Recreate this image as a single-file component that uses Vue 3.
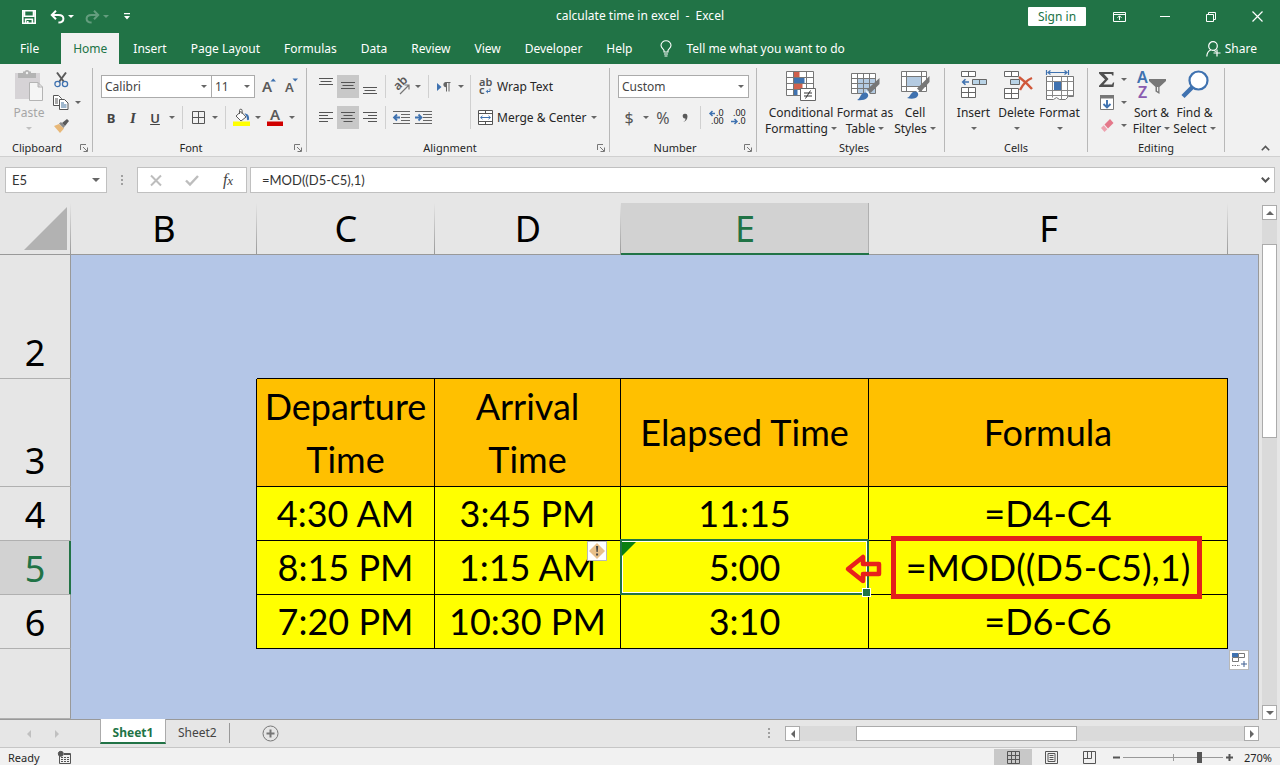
<template>
  <div class="excel">
    <header class="titlebar">
      <div class="quick">
        <button class="quick__btn" aria-label="Save">
          <svg width="14" height="14" viewBox="0 0 14 14" fill="none" stroke="#fff" stroke-width="1.6">
            <path d="M.8.8h12.4v12.4H.8z M2.5 1v5.2h9V1 M3.6 13V9.3h6.8V13 M5.8 13v-2" />
          </svg>
        </button>
        <button class="quick__btn quick__btn--wide" aria-label="Undo">
          <svg width="15" height="14" viewBox="0 0 15 14" fill="none" stroke="#fff" stroke-width="2">
            <path d="M6 .8 1.8 5 6 9.2 M2 5h6.5c3 0 4.9 1.5 4.9 3.8 0 2.4-2 3.8-5 3.8" />
          </svg>
          <span class="caret caret--white"></span>
        </button>
        <button class="quick__btn quick__btn--wide quick__btn--off" aria-label="Redo">
          <svg width="15" height="14" viewBox="0 0 15 14" fill="none" stroke="#fff" stroke-width="2">
            <path d="M9 .8 13.2 5 9 9.2 M13 5H6.5c-3 0-4.9 1.5-4.9 3.8 0 2.4 2 3.8 5 3.8" />
          </svg>
          <span class="caret caret--white"></span>
        </button>
        <button class="quick__btn quick__btn--more" aria-label="Customize Quick Access Toolbar">
          <svg width="6" height="7" viewBox="0 0 6 7" fill="#fff"><path d="M0 0h6v1.2H0z M0 3h6L3 6.5z" /></svg>
        </button>
      </div>
      <div class="titlebar__name">calculate time in excel&nbsp; -&nbsp; Excel</div>
      <div class="titlebar__right">
        <button class="signin">Sign in</button>
        <button class="win" aria-label="Ribbon Display Options">
          <svg width="13" height="10" viewBox="0 0 13 10" fill="none" stroke="#fff"><path d="M.5.5h12v9H.5z M.5 2.5h12 M6.5 8V4 M4.5 5.8l2-2 2 2" /></svg>
        </button>
        <button class="win" aria-label="Minimize">
          <svg width="10" height="10" viewBox="0 0 10 10" stroke="#fff"><path d="M0 4.5h10" /></svg>
        </button>
        <button class="win" aria-label="Restore Down">
          <svg width="10" height="10" viewBox="0 0 10 10" fill="none" stroke="#fff"><path d="M.5 2.5h7v7h-7z M2.5 2.5v-2h7v7h-2" /></svg>
        </button>
        <button class="win" aria-label="Close">
          <svg width="11" height="11" viewBox="0 0 11 11" stroke="#fff" stroke-width="1.2"><path d="M.5.5l10 10 M10.5.5l-10 10" /></svg>
        </button>
      </div>
    </header>

    <nav class="tabs">
      <button
        v-for="tab in tabs"
        :key="tab"
        class="tabs__item"
        :class="{ 'tabs__item--active': tab === activeTab, 'tabs__item--file': tab === 'File' }"
        @click="activeTab = tab"
      >{{ tab }}</button>
      <button class="tabs__tell">
        <svg width="12" height="17" viewBox="0 0 12 17" fill="none" stroke="#fff" stroke-width="1.1">
          <path d="M4 12v-1.5C3.5 9 1 8 1 5.3 1 2.7 3.2.8 6 .8s5 1.9 5 4.5C11 8 8.5 9 8 10.5V12z M4 14h4 M4.5 16h3" />
        </svg>
        Tell me what you want to do
      </button>
      <button class="tabs__share">
        <svg width="15" height="16" viewBox="0 0 15 16" fill="none" stroke="#fff" stroke-width="1.2">
          <circle cx="7" cy="5" r="4.3" /><path d="M.8 15.5c.2-3.5 1.7-5.700 4-6.500 M8 9.500l2 1 M11 8.500v7 M7.500 12h7" />
        </svg>
        Share
      </button>
    </nav>

    <section class="ribbon">
      <div class="group group--clipboard">
        <div class="group__body">
          <button class="big big--off">
            <svg width="30" height="32" viewBox="0 0 30 32">
              <path d="M1 4h25v26H1z" fill="#d6d3d6" />
              <path d="M4 4h18v5H4z M9 2.500h8v3H9z" fill="#b4b4b4" />
              <circle cx="13" cy="3.500" r="2.500" fill="#b4b4b4" />
              <circle cx="13" cy="4" r="1.200" fill="#f1f1f1" />
              <path d="M15.500 13.500h8.500l4.500 4.500v13.500h-13z M24 13.500V18h4.500" fill="#f5f5f5" stroke="#b4b4b4" />
            </svg>
            <span>Paste</span>
            <span class="caret"></span>
          </button>
          <div class="stack">
            <button class="tool" aria-label="Cut">
              <svg width="15" height="16" viewBox="0 0 15 16" fill="none">
                <path d="M3 .5l7 9.500 M12 .5L5 10" stroke="#5a5a5a" stroke-width="2" />
                <circle cx="3.500" cy="12" r="2.600" stroke="#3f72b0" stroke-width="1.300" /><circle cx="11" cy="12" r="2.600" stroke="#3f72b0" stroke-width="1.300" />
              </svg>
            </button>
            <div class="row-pair">
              <button class="tool" aria-label="Copy">
                <svg width="16" height="15" viewBox="0 0 16 15" fill="#fff" stroke="#555">
                  <path d="M.5.5h5l3 3v7h-8z M2 4h3 M2 6h3 M2 8h3" />
                  <path d="M6.500 4.500h5l3.500 3.500v6.500H6.500z" /><path d="M8 8h3 M8 10h5.500 M8 12h5.500" stroke="#41719c" />
                </svg>
              </button>
              <button class="drop" aria-label="Copy options"><span class="caret"></span></button>
            </div>
            <button class="tool" aria-label="Format Painter">
              <svg width="16" height="14" viewBox="0 0 16 14">
                <path d="M1 7l5-2 5 4.500L7 14z" fill="#e8b878" /><path d="M6 4.500l2-1.500 4 4-1.500 2z" fill="#8a8a8a" /><path d="M9 4l5-4 2 2-4 5z" fill="#5a5a5a" />
              </svg>
            </button>
          </div>
        </div>
        <div class="group__label">Clipboard</div>
        <button class="launcher" aria-label="Clipboard options"><svg width="8" height="8" viewBox="0 0 8 8" fill="none" stroke="#777"><path d="M.5 6V.5H6 M3 3l4 4 M7.500 3.500v4h-4" /></svg></button>
      </div>

      <div class="group group--font">
        <div class="group__rows">
          <div class="line">
            <label class="combo combo--font">
              <select aria-label="Font"><option>Calibri</option></select><span class="caret"></span>
            </label>
            <label class="combo combo--size">
              <select aria-label="Font Size"><option>11</option></select><span class="caret"></span>
            </label>
            <button class="tool tool--grow" aria-label="Increase Font Size">
              <svg width="15" height="17" viewBox="0 0 15 17"><text x="0" y="14" font-size="15" font-weight="600" fill="#5a5a5a">A</text><path d="M8.500 3.500h5.500L11.200.5z" fill="#3f72b0" /></svg>
            </button>
            <button class="tool" aria-label="Decrease Font Size">
              <svg width="15" height="17" viewBox="0 0 15 17"><text x="1" y="14" font-size="13" font-weight="600" fill="#5a5a5a">A</text><path d="M8.500.5h5.500L11.200 3.500z" fill="#3f72b0" /></svg>
            </button>
          </div>
          <div class="line">
            <button class="tool glyph glyph--b">B</button>
            <button class="tool glyph glyph--i">I</button>
            <button class="tool glyph glyph--u">U</button>
            <button class="drop" aria-label="Underline options"><span class="caret"></span></button>
            <span class="sep"></span>
            <button class="tool" aria-label="Borders">
              <svg width="13" height="13" viewBox="0 0 13 13" fill="none" stroke="#555"><path d="M.5.5h12v12H.5z M6.500.5v12 M.5 6.500h12" /></svg>
            </button>
            <button class="drop" aria-label="Border options"><span class="caret"></span></button>
            <span class="sep"></span>
            <button class="tool" aria-label="Fill Color">
              <svg width="17" height="17" viewBox="0 0 17 17">
                <path d="M3 7l5-4.500L13 8l-5 4z M6.500 5V1.500a1.300 1.300 0 0 1 2.600 0V5" fill="#fff" stroke="#5a5a5a" />
                <path d="M11.500 4.500c3 0 5 2 4.500 6-.5 1-1.800 1-2 0 0-2-.7-4-2.500-6z" fill="#3f72b0" /><path d="M0 12.500h17V17H0z" fill="#ff0" />
              </svg>
            </button>
            <button class="drop" aria-label="Fill options"><span class="caret"></span></button>
            <button class="tool" aria-label="Font Color">
              <svg width="17" height="17" viewBox="0 0 17 17"><text x="3" y="11" font-size="15" font-weight="600" fill="#5a5a5a">A</text><path d="M0 12.500h16V17H0z" fill="#d00000" /></svg>
            </button>
            <button class="drop" aria-label="Font color options"><span class="caret"></span></button>
          </div>
        </div>
        <div class="group__label">Font</div>
        <button class="launcher" aria-label="Font options"><svg width="8" height="8" viewBox="0 0 8 8" fill="none" stroke="#777"><path d="M.5 6V.5H6 M3 3l4 4 M7.500 3.500v4h-4" /></svg></button>
      </div>

      <div class="group group--align">
        <div class="group__cols">
          <div class="group__rows">
            <div class="line">
              <button class="tool" aria-label="Top Align"><svg width="14" height="17" viewBox="0 0 14 17" stroke="#555"><path d="M0 .5h14 M1.500 3.500h11 M0 6.500h14" /></svg></button>
              <button class="tool tool--on" aria-label="Middle Align"><svg width="14" height="17" viewBox="0 0 14 17" stroke="#555"><path d="M0 4.500h14 M1.500 7.500h11 M0 10.500h14" /></svg></button>
              <button class="tool" aria-label="Bottom Align"><svg width="14" height="17" viewBox="0 0 14 17" stroke="#555"><path d="M0 9.500h14 M1.500 12.500h11 M0 15.500h14" /></svg></button>
              <span class="sep"></span>
              <button class="tool" aria-label="Orientation">
                <svg width="17" height="17" viewBox="0 0 17 17"><text x="0" y="0" font-size="12" font-weight="600" fill="#5a5a5a" transform="translate(5 13) rotate(-45)">ab</text><path d="M7 16l8.500-8.500 M11.500 7h4.500v4.500" fill="none" stroke="#777" stroke-width="1.200" /></svg>
              </button>
              <button class="drop" aria-label="Orientation options"><span class="caret"></span></button>
              <span class="sep"></span>
              <button class="tool" aria-label="Text Direction">
                <svg width="14" height="12" viewBox="0 0 14 12"><path d="M0 2l4.500 4L0 10z" fill="#3f72b0" /><path d="M8.500 1.500h5 M9.500 1v9.500 M12 1v9.500" stroke="#666" fill="none" /><path d="M9 1a2.600 2.600 0 0 0 0 5.200z" fill="#666" /></svg>
              </button>
              <button class="drop" aria-label="Text direction options"><span class="caret"></span></button>
            </div>
            <div class="line">
              <button class="tool" aria-label="Align Left"><svg width="14" height="11" viewBox="0 0 14 11" stroke="#555"><path d="M0 .5h14 M0 3.500h9 M0 6.500h14 M0 9.500h9" /></svg></button>
              <button class="tool tool--on" aria-label="Center"><svg width="14" height="11" viewBox="0 0 14 11" stroke="#555"><path d="M0 .5h14 M2.500 3.500h9 M0 6.500h14 M2.500 9.500h9" /></svg></button>
              <button class="tool" aria-label="Align Right"><svg width="14" height="11" viewBox="0 0 14 11" stroke="#555"><path d="M0 .5h14 M5 3.500h9 M0 6.500h14 M5 9.500h9" /></svg></button>
              <span class="sep"></span>
              <button class="tool" aria-label="Decrease Indent">
                <svg width="17" height="13" viewBox="0 0 17 13" fill="none"><path d="M0 .5h17 M8 3.500h9 M8 6.500h9 M8 9.500h9 M0 12.500h17" stroke="#666" /><path d="M7 6.500H1 M4 3.500l-3 3 3 3" stroke="#3f72b0" stroke-width="1.800" /></svg>
              </button>
              <button class="tool" aria-label="Increase Indent">
                <svg width="17" height="13" viewBox="0 0 17 13" fill="none"><path d="M0 .5h17 M8 3.500h9 M8 6.500h9 M8 9.500h9 M0 12.500h17" stroke="#666" /><path d="M0 6.500h6 M3.500 3.500l3 3-3 3" stroke="#3f72b0" stroke-width="1.800" /></svg>
              </button>
            </div>
          </div>
          <div class="group__rows group__rows--ruled">
            <button class="wide">
              <svg width="15" height="16" viewBox="0 0 15 16"><text x="1" y="7" font-size="11" font-weight="600" fill="#555">ab</text><text x="1" y="15" font-size="11" font-weight="600" fill="#555">c</text><path d="M12 9.500v3H8.500 M10 10.800l-1.700 1.700 1.700 1.700" fill="none" stroke="#3f72b0" /></svg>
              Wrap Text
            </button>
            <button class="wide">
              <svg width="15" height="15" viewBox="0 0 15 15" fill="#fff" stroke="#555"><path d="M.5.5h14v14H.5z M.5 3.500h14 M.5 11.500h14 M7.500.5v3 M7.500 11.500v3" /><path d="M2.500 7.500h10 M4.500 5.800L2.700 7.500l1.800 1.700 M10.500 5.800l1.800 1.700-1.800 1.700" fill="none" stroke="#3f72b0" /></svg>
              Merge &amp; Center
              <span class="caret"></span>
            </button>
          </div>
        </div>
        <div class="group__label">Alignment</div>
        <button class="launcher" aria-label="Alignment options"><svg width="8" height="8" viewBox="0 0 8 8" fill="none" stroke="#777"><path d="M.5 6V.5H6 M3 3l4 4 M7.500 3.500v4h-4" /></svg></button>
      </div>

      <div class="group group--number">
        <div class="group__rows">
          <label class="combo combo--number">
            <select aria-label="Number Format"><option>Custom</option></select><span class="caret"></span>
          </label>
          <div class="line">
            <button class="tool glyph glyph--num" aria-label="Accounting Number Format">$</button>
            <button class="drop" aria-label="Currency options"><span class="caret"></span></button>
            <button class="tool glyph glyph--num" aria-label="Percent Style">%</button>
            <button class="tool" aria-label="Comma Style"><svg width="6" height="9" viewBox="0 0 6 9"><path d="M1 9c2-.8 2.500-2 2.500-3.500A2.400 2.400 0 1 1 5.500 3C5.500 6 4 8.500 1 9z" fill="#5a5a5a" /></svg></button>
            <span class="sep"></span>
            <button class="tool" aria-label="Increase Decimal">
              <svg width="15" height="15" viewBox="0 0 15 15"><text x="7" y="6" font-size="9" fill="#222">.0</text><text x="2" y="14" font-size="9" fill="#222">.00</text><path d="M6 3.500H1 M3.500 1L1 3.500 3.500 6" fill="none" stroke="#3f72b0" stroke-width="1.500" /></svg>
            </button>
            <button class="tool" aria-label="Decrease Decimal">
              <svg width="15" height="15" viewBox="0 0 15 15"><text x="2" y="6" font-size="9" fill="#222">.00</text><text x="7" y="14" font-size="9" fill="#222">.0</text><path d="M0 11.500h5.500 M3.500 9L6 11.500 3.500 14" fill="none" stroke="#3f72b0" stroke-width="1.500" /></svg>
            </button>
          </div>
        </div>
        <div class="group__label">Number</div>
        <button class="launcher" aria-label="Number options"><svg width="8" height="8" viewBox="0 0 8 8" fill="none" stroke="#777"><path d="M.5 6V.5H6 M3 3l4 4 M7.500 3.500v4h-4" /></svg></button>
      </div>

      <div class="group group--styles">
        <div class="group__body">
          <button class="big">
            <svg width="30" height="32" viewBox="0 0 30 32">
              <path d="M.5 2.500h27v24H.5z" fill="#fff" /><path d="M7.500 2.500h6v6h-6z M7.500 14.500h9v6h-9z" fill="#d0604c" /><path d="M7.500 8.500h11v6h-11z M7.500 20.500h4v6h-4z" fill="#3f72b0" />
              <path d="M.5 2.500h27v24H.5z M7.500 2.500v24 M20.500 2.500v24 M.5 8.500h27 M.5 14.500h27 M.5 20.500h27" fill="none" stroke="#777" />
              <path d="M14.500 19.500h15v12h-15z" fill="#fff" stroke="#666" /><path d="M18 24h8 M18 27h8 M24.500 21.500l-5 8" fill="none" stroke="#333" />
            </svg>
            <span>Conditional<br />Formatting<i class="caret caret--inline"></i></span>
          </button>
          <button class="big">
            <svg width="30" height="32" viewBox="0 0 30 32">
              <path d="M1.500 4.500h24v20h-24z" fill="#fff" /><path d="M7.500 9.500h18v15h-18z" fill="#b4cbe2" /><path d="M1.500 4.500h24v20h-24z M7.500 4.500v20 M13.500 4.500v20 M19.500 4.500v20 M1.500 9.500h24 M1.500 14.500h24 M1.500 19.500h24" fill="none" stroke="#777" />
              <path d="M29.500 9v6l-9 9-3.500-3.500z" fill="#777" /><path d="M16 21l4 4-3 1z" fill="#fff" /><path d="M7 31c3-1 3-5 6-7 4-2 7 2 4 5-2 2-6 2.500-10 2z" fill="#3f72b0" />
            </svg>
            <span>Format as<br />Table<i class="caret caret--inline"></i></span>
          </button>
          <button class="big">
            <svg width="30" height="32" viewBox="0 0 30 32">
              <path d="M1.500 2.500h25v20h-25z" fill="#fff" /><path d="M6.500 7.500h15v10h-15z" fill="#b4cbe2" /><path d="M1.500 2.500h25v20h-25z M6.500 2.500v20 M21.500 2.500v20 M1.500 7.500h25 M1.500 17.500h25" fill="none" stroke="#777" />
              <path d="M29.500 7v6l-9 10-3.500-3.500z" fill="#777" /><path d="M16 20l4 4-3 1z" fill="#fff" /><path d="M7 29c3-1 3-4 6-6 4-2 7 2 4 5-2 2-6 2-10 1z" fill="#3f72b0" />
            </svg>
            <span>Cell<br />Styles<i class="caret caret--inline"></i></span>
          </button>
        </div>
        <div class="group__label">Styles</div>
      </div>

      <div class="group group--cells">
        <div class="group__body">
          <button class="big">
            <svg width="30" height="32" viewBox="0 0 30 32">
              <path d="M2.500 2.500h14v5h-14z M9.500 2.500v5 M2.500 18.500h14v10h-14z M9.500 18.500v10 M2.500 23.500h14" fill="#fff" stroke="#666" /><path d="M13.500 10.500h14v5h-14z M20.500 10.500v5" fill="#b9d3e6" stroke="#666" />
              <path d="M10 13H4 M6.500 10.200L3.700 13l2.800 2.800" fill="none" stroke="#3f72b0" stroke-width="1.600" />
            </svg>
            <span>Insert</span>
            <span class="caret"></span>
          </button>
          <button class="big">
            <svg width="30" height="32" viewBox="0 0 30 32">
              <path d="M2.500 2.500h14v5h-14z M9.500 2.500v5 M2.500 19.500h14v10h-14z M9.500 19.500v10 M2.500 24.500h14" fill="#fff" stroke="#666" /><path d="M8.500 10.500h9v5h-9z" fill="#b9d3e6" stroke="#666" />
              <path d="M17 8c4 3 8 6 13 12 M30 9c-5 2-9 6-12 12" fill="none" stroke="#d0583a" stroke-width="2.400" />
            </svg>
            <span>Delete</span>
            <span class="caret"></span>
          </button>
          <button class="big">
            <svg width="30" height="32" viewBox="0 0 30 32">
              <path d="M1.500 7.500h27v20h-5l-3 3h-6l-3-2-3 2h-7z" fill="#fff" stroke="#777" /><path d="M7.500 7.500v21 M16.500 7.500v23 M22.500 7.500v21 M1.500 12.500h27 M1.500 21.500h27 M1.500 26.500h27" stroke="#888" />
              <path d="M9 13h7v8H9z" fill="#3f72b0" /><path d="M1.500 1v5 M23.500 1v5 M3 3.500h19 M5.500 1.500l-2.500 2 2.500 2 M19.500 1.500l2.500 2-2.500 2" fill="none" stroke="#3f72b0" stroke-width="1.200" />
            </svg>
            <span>Format</span>
            <span class="caret"></span>
          </button>
        </div>
        <div class="group__label">Cells</div>
      </div>

      <div class="group group--editing">
        <div class="group__body">
          <div class="stack">
            <div class="row-pair">
              <button class="tool" aria-label="AutoSum"><svg width="16" height="15" viewBox="0 0 16 15"><path d="M0 0h14.500v3.500h-1.200L12.500 2H5l4.500 5-5 5.500h8.500l1-2h1.200L14.500 15H0v-1.300L6 7.500 0 1.500z" fill="#505050" /></svg></button>
              <button class="drop" aria-label="AutoSum options"><span class="caret"></span></button>
            </div>
            <div class="row-pair">
              <button class="tool" aria-label="Fill"><svg width="15" height="15" viewBox="0 0 15 15"><path d="M.5.5h13v14H.5z" fill="#fff" stroke="#777" /><path d="M0 0h14v3.500H0z" fill="#777" /><path d="M7 5v7.500 M3.500 9L7 12.500 10.500 9" fill="none" stroke="#3f72b0" stroke-width="1.900" /></svg></button>
              <button class="drop" aria-label="Fill options"><span class="caret"></span></button>
            </div>
            <div class="row-pair">
              <button class="tool" aria-label="Clear"><svg width="14" height="13" viewBox="0 0 14 13"><path d="M4.500 5.500L10 0l3.500 4L8 9.500z" fill="#e4788a" /><path d="M3.800 6.200l3.500 4L4.500 13 1 9z" fill="#eda3b0" /></svg></button>
              <button class="drop" aria-label="Clear options"><span class="caret"></span></button>
            </div>
          </div>
          <button class="big">
            <svg width="30" height="32" viewBox="0 0 30 32">
              <text x="0" y="14" font-size="16" font-weight="600" fill="#3f72b0">A</text><text x="1" y="29" font-size="16" font-weight="600" fill="#8a5cb0">Z</text>
              <path d="M12 10h17v2l-6.500 6v7l-4-2.500V18L12 12z" fill="#777" /><path d="M20 18h1.200v4.500L20 22z" fill="#f1f1f1" />
            </svg>
            <span>Sort &amp;<br />Filter<i class="caret caret--inline"></i></span>
          </button>
          <button class="big">
            <svg width="30" height="32" viewBox="0 0 30 32"><path d="M12.500 18L3 27.500" stroke="#3f72b0" stroke-width="4.500" /><circle cx="18.500" cy="11.500" r="9" fill="#fff" stroke="#3f72b0" stroke-width="2.200" /></svg>
            <span>Find &amp;<br />Select<i class="caret caret--inline"></i></span>
          </button>
        </div>
        <div class="group__label">Editing</div>
      </div>
      <button class="collapse" aria-label="Collapse the Ribbon"><svg width="9" height="6" viewBox="0 0 9 6" fill="none" stroke="#555" stroke-width="1.600"><path d="M.8 5.200L4.500 1.500l3.700 3.700" /></svg></button>
    </section>

    <section class="formula">
      <div class="namebox">
        <input v-model="cellName" aria-label="Name Box" /><span class="caret caret--big"></span>
      </div>
      <span class="dots"></span>
      <div class="formula__tools">
        <button aria-label="Cancel"><svg width="12" height="11" viewBox="0 0 12 11" stroke="#bdbdbd" stroke-width="2"><path d="M1 .5l10 10 M11 .5l-10 10" /></svg></button>
        <button aria-label="Enter"><svg width="14" height="11" viewBox="0 0 14 11" fill="none" stroke="#bdbdbd" stroke-width="2.400"><path d="M1 5.500L5 9.500 13 1" /></svg></button>
        <button class="fx" aria-label="Insert Function">f<small>x</small></button>
      </div>
      <div class="formula__box">
        <input v-model="formula" aria-label="Formula Bar" />
        <svg width="9" height="6" viewBox="0 0 9 6" fill="none" stroke="#555" stroke-width="2"><path d="M.8.8L4.500 4.500 8.200.8" /></svg>
      </div>
    </section>

    <main class="work">
      <div class="sheet">
        <table class="grid">
          <colgroup>
            <col class="col-head" />
            <col v-for="c in columns" :key="c" :class="'col-' + c.toLowerCase()" />
            <col />
          </colgroup>
          <thead>
            <tr>
              <th class="corner"><svg width="43" height="43" viewBox="0 0 43 43"><path d="M43 0v43H0z" fill="#b2b2b2" /></svg></th>
              <th v-for="c in columns" :key="c" :class="{ 'is-active': c === 'E' }">{{ c }}</th>
              <th class="last"></th>
            </tr>
          </thead>
          <tbody>
            <tr class="row-2">
              <th>2</th>
              <td></td>
              <td v-for="n in 4" :key="n" class="above"></td>
              <td class="edge"></td>
            </tr>
            <tr v-for="row in rows" :key="row.num" :class="'row-' + row.num">
              <th :class="{ 'is-active': row.num === 5 }">{{ row.num }}</th>
              <td class="before"></td>
              <td
                v-for="(cell, i) in row.cells"
                :key="i"
                class="cell"
                :class="{ 'cell--head': row.num === 3 }"
              >
                {{ cell }}
                <template v-if="row.num === 5">
                  <button v-if="i === 1" class="warn" aria-label="Error checking">
                    <svg width="20" height="20" viewBox="0 0 20 20"><path d="M10 2l8 8-8 8-8-8z" fill="#e8c08a" /><path d="M9 5h2.200l-.5 6H9.500z M9.100 12.500h2v2h-2z" fill="#444" /></svg>
                  </button>
                  <span v-if="i === 2" class="selection"></span>
                  <svg v-if="i === 2" class="arrow" width="37" height="32" viewBox="0 0 37 32"><path d="M3 16L18 4v7h16v10H18v7z" fill="none" stroke="#e8201c" stroke-width="4.500" stroke-linejoin="round" /></svg>
                  <span v-if="i === 3" class="callout"></span>
                </template>
                <button v-if="row.num === 6 && i === 3" class="autofill" aria-label="Auto Fill Options">
                  <svg width="20" height="20" viewBox="0 0 20 20" fill="none"><path d="M3 3h6v4H3z" fill="#3f72b0" /><path d="M9.500 3.500h6v4h-6z M3.500 7.500h6v4h-6z" stroke="#777" /><path d="M3 15.500h8" stroke="#777" stroke-dasharray="1.500 1" /><path d="M15 11v6 M12 14h6" stroke="#3f5f90" /></svg>
                </button>
              </td>
              <td class="edge"></td>
            </tr>
            <tr>
              <th></th>
              <td colspan="6" class="edge"></td>
            </tr>
          </tbody>
        </table>
      </div>
      <div class="vbar">
        <button aria-label="Scroll up"><span class="tri tri--up"></span></button>
        <div class="vbar__track"><div class="vbar__thumb"></div></div>
        <button aria-label="Scroll down"><span class="tri tri--down"></span></button>
      </div>
    </main>

    <section class="sheets">
      <button class="sheets__nav" aria-label="Previous sheet"><span class="tri tri--left"></span></button>
      <button class="sheets__nav" aria-label="Next sheet"><span class="tri tri--right"></span></button>
      <button class="sheets__tab sheets__tab--active">Sheet1</button>
      <button class="sheets__tab">Sheet2</button>
      <button class="sheets__add" aria-label="New sheet">
        <svg width="17" height="17" viewBox="0 0 17 17" fill="none" stroke="#777"><circle cx="8.500" cy="8.500" r="7.500" /><path d="M8.500 4.500v8 M4.500 8.500h8" stroke-width="2" /></svg>
      </button>
      <div class="hbar">
        <span class="dots dots--small"></span>
        <button aria-label="Scroll left"><span class="tri tri--left"></span></button>
        <div class="hbar__track"><div class="hbar__thumb"></div></div>
        <button aria-label="Scroll right"><span class="tri tri--right"></span></button>
      </div>
    </section>

    <footer class="status">
      <span class="status__ready">Ready</span>
      <button class="status__macro" aria-label="Record Macro">
        <svg width="14" height="13" viewBox="0 0 14 13" fill="none" stroke="#555"><path d="M3 6.500h8 M3 8.500h8 M3 10.500h8" stroke-dasharray="2 1" /><path d="M1.500 5v7.500h11v-10H6 M6 3.500h7" /><circle cx="2.800" cy="2.800" r="2.500" fill="#555" /></svg>
      </button>
      <button class="view view--on" aria-label="Normal"><svg width="13" height="13" viewBox="0 0 13 13" fill="none" stroke="#555"><path d="M.5.5h12v12H.5z M4.500.5v12 M8.500.5v12 M.5 4.500h12 M.5 8.500h12" /></svg></button>
      <button class="view" aria-label="Page Layout"><svg width="13" height="13" viewBox="0 0 13 13" fill="none" stroke="#555"><path d="M.5.5h12v12H.5z M3 2.500h7v8H3z M4.500 4.500h4 M4.500 6.500h4 M4.500 8.500h4" /></svg></button>
      <button class="view" aria-label="Page Break Preview"><svg width="13" height="13" viewBox="0 0 13 13" fill="none" stroke="#555"><path d="M.5.5h12v12H.5z M4.500.5v7 M8.500.5v7 M.5 7.500h8" /></svg></button>
      <button class="zoom" aria-label="Zoom Out"><svg width="7" height="7" viewBox="0 0 7 7" stroke="#555" stroke-width="2"><path d="M0 3.500h7" /></svg></button>
      <input v-model="zoom" class="slider" type="range" min="0" max="100" aria-label="Zoom" />
      <button class="zoom" aria-label="Zoom In"><svg width="7" height="7" viewBox="0 0 7 7" stroke="#555" stroke-width="2"><path d="M0 3.500h7 M3.500 0v7" /></svg></button>
      <span class="status__pct">270%</span>
    </footer>
  </div>
</template>

<script setup>
import { ref } from "vue";

const tabs = ["File", "Home", "Insert", "Page Layout", "Formulas", "Data", "Review", "View", "Developer", "Help"];
const activeTab = ref("Home");

const cellName = ref("E5");
const formula = ref("=MOD((D5-C5),1)");
const zoom = ref(78);

const columns = ["B", "C", "D", "E", "F"];
const rows = [
  { num: 3, cells: ["Departure Time", "Arrival Time", "Elapsed Time", "Formula"] },
  { num: 4, cells: ["4:30 AM", "3:45 PM", "11:15", "=D4-C4"] },
  { num: 5, cells: ["8:15 PM", "1:15 AM", "5:00", "=MOD((D5-C5),1)"] },
  { num: 6, cells: ["7:20 PM", "10:30 PM", "3:10", "=D6-C6"] }
];
</script>

<style>
body {
  margin: 0;
}
</style>

<style scoped>
.excel {
  display: flex;
  flex-direction: column;
  height: 100vh;
  overflow: hidden;
  background: #e6e6e6;
  color: #262626;
  font-family: "Noto Sans", "Open Sans", sans-serif;
  font-size: 12px;
  line-height: 16px;
}

.excel * {
  box-sizing: border-box;
}

button,
input,
select {
  margin: 0;
  padding: 0;
  border: none;
  background: none;
  color: inherit;
  font: inherit;
  outline: none;
}

button {
  display: flex;
  align-items: center;
  justify-content: center;
  white-space: nowrap;
}

svg {
  display: block;
  flex: none;
  overflow: visible;
}

.caret {
  flex: none;
  width: 0;
  height: 0;
  border: 3px solid transparent;
  border-top-color: #666;
  border-bottom: none;
}

.caret--white {
  border-top-color: #fff;
}

.caret--big {
  border-width: 4px;
  border-bottom: none;
}

.caret--inline {
  display: inline-block;
  margin-left: 3px;
  vertical-align: 3px;
}

/* Title bar */
.titlebar {
  display: grid;
  grid-template-columns: 1fr auto 1fr;
  align-items: center;
  height: 33px;
  background: #217346;
  color: #fff;
}

.titlebar__name {
  height: 18px;
}

.quick {
  display: flex;
  align-items: center;
  padding-left: 18px;
}

.quick__btn {
  width: 22px;
  height: 24px;
}

.quick__btn--wide {
  width: 35px;
  padding-left: 9px;
  gap: 3px;
}

.quick__btn--off {
  opacity: 0.3;
}

.quick__btn--more {
  margin-left: 6px;
}

.titlebar__right {
  display: flex;
  align-items: center;
  justify-content: flex-end;
}

.signin {
  height: 19px;
  width: 58px;
  margin-right: 10px;
  border-radius: 1px;
  background: #fff;
  color: #217346;
}

.win {
  width: 46px;
  height: 32px;
}

/* Ribbon tabs */
.tabs {
  display: flex;
  height: 31px;
  background: #217346;
  color: #fff;
}

.tabs__item {
  padding: 0 12px;
}

.tabs__item--file {
  padding-left: 20px;
  margin-right: 10px;
}

.tabs__item--active {
  margin-right: 2px;
  background: #f1f1f1;
  color: #217346;
}

.tabs__tell {
  margin-left: 16px;
  gap: 14px;
}

.tabs__share {
  margin-left: auto;
  padding-right: 23px;
  gap: 4px;
}

/* Ribbon */
.ribbon {
  display: flex;
  height: 93px;
  padding-top: 4px;
  background: #f1f1f1;
  border-bottom: 1px solid #d0d0d0;
}

.group {
  position: relative;
  display: flex;
  flex-direction: column;
  height: 84px;
  border-right: 1px solid #b8b8b8;
}

.group__body,
.group__cols {
  display: flex;
}

.group__body {
  flex: 1;
}

.group__rows {
  display: flex;
  flex-direction: column;
  gap: 8px;
  flex: 1;
  padding-top: 7px;
}

.group__label {
  margin-top: auto;
  height: 12px;
  line-height: 16px;
  font-size: 11px;
  text-align: center;
}

.launcher {
  position: absolute;
  right: 4px;
  bottom: 0;
}

.group--clipboard {
  flex: 0 0 93px;
}

.group--clipboard .group__body {
  padding-left: 12px;
  gap: 4px;
}

.group--clipboard .group__label {
  padding-right: 18px;
}

.group--font {
  flex: 0 0 214px;
  padding-left: 7px;
}

.group--font .group__label {
  padding-right: 24px;
}

.group--align {
  flex: 0 0 303px;
  padding-left: 8px;
}

.group--align .group__label {
  padding-right: 24px;
}

.group--align .group__rows {
  flex: none;
}

.group--align .group__rows:first-child {
  width: 155px;
}

.group--align .group__rows--ruled {
  align-items: flex-start;
  margin-top: 7px;
  padding: 0 0 0 7px;
  border-left: 1px solid #d0d0d0;
}

.group--number {
  flex: 0 0 147px;
  padding-left: 8px;
}

.group--number .group__label {
  padding-right: 24px;
}

.group--styles {
  flex: 0 0 188px;
  padding-left: 7px;
}

.group--styles .big:nth-child(1) {
  width: 74px;
}

.group--styles .big:nth-child(2) {
  width: 54px;
}

.group--styles .big:nth-child(3) {
  width: 46px;
}

.group--cells {
  flex: 0 0 143px;
  padding-left: 7px;
}

.group--cells .big {
  width: 43px;
}

.group--cells .group__label {
  padding-right: 7px;
}

.group--editing {
  flex: 0 0 137px;
  padding-left: 8px;
}

.group--editing .big {
  width: 43px;
}

.group--editing .group__label {
  padding-right: 8px;
}

.line,
.row-pair {
  display: flex;
  align-items: center;
}

.line {
  height: 23px;
}

.stack {
  display: flex;
  flex-direction: column;
  align-items: flex-start;
}

.tool {
  flex: none;
  width: 22px;
  height: 23px;
}

.tool--on {
  background: #c8c8c8;
}

.tool--grow {
  margin-left: 3px;
}

.drop {
  flex: none;
  width: 12px;
  height: 23px;
}

.sep {
  width: 1px;
  height: 23px;
  margin: 0 4px;
  background: #d0d0d0;
}

.glyph {
  color: #444;
  font-size: 13px;
}

.glyph--b {
  font-weight: 700;
}

.glyph--i {
  font-family: "Liberation Serif", serif;
  font-size: 15px;
  font-style: italic;
  font-weight: 700;
}

.glyph--u {
  font-weight: 600;
  text-decoration: underline;
}

.glyph--num {
  color: #555;
  font-size: 16px;
}

.big {
  flex: none;
  flex-direction: column;
  justify-content: flex-start;
  height: 69px;
  padding-top: 1px;
}

.big svg {
  margin-bottom: 4px;
}

.big > .caret {
  margin-top: 6px;
}

.big--off {
  width: 34px;
  color: #a6a6a6;
}

.big--off .caret {
  border-top-color: #c0c0c0;
}

.wide {
  height: 23px;
  gap: 4px;
}

.combo {
  position: relative;
  display: flex;
  align-items: center;
  height: 23px;
  border: 1px solid #ababab;
  background: #fff;
  color: #444;
}

.combo + .combo {
  border-left: none;
}

.combo select {
  width: 100%;
  height: 21px;
  padding-left: 3px;
  appearance: none;
}

.combo .caret {
  position: absolute;
  right: 4px;
  pointer-events: none;
}

.combo--font {
  width: 111px;
  margin-left: 1px;
}

.combo--size {
  width: 43px;
}

.combo--number {
  width: 131px;
}

.collapse {
  align-self: flex-end;
  margin: 0 10px 5px auto;
}

/* Formula bar */
.formula {
  display: flex;
  align-items: center;
  height: 46px;
  padding: 0 5px;
}

.namebox,
.formula__tools,
.formula__box {
  display: flex;
  align-items: center;
  height: 26px;
  border: 1px solid #c0c0c0;
  background: #fff;
}

.namebox {
  width: 102px;
  padding-right: 6px;
}

.namebox input {
  flex: 1;
  min-width: 0;
  padding-left: 6px;
}

.namebox input,
.formula__box input {
  height: 24px;
  color: #333;
  font-family: Lato, sans-serif;
  font-size: 13px;
}

.dots {
  width: 2px;
  height: 11px;
  margin: 0 14px;
  background: repeating-linear-gradient(#a0a0a0 0 2px, transparent 2px 4px);
}

.formula__tools {
  width: 110px;
  margin-right: 3px;
}

.formula__tools button {
  flex: 1;
  height: 24px;
}

.fx {
  color: #444;
  font-family: "Liberation Serif", serif;
  font-size: 16px;
  font-style: italic;
}

.fx small {
  padding-top: 2px;
  font-size: 13px;
}

.formula__box {
  flex: 1;
  padding-right: 4px;
}

.formula__box input {
  flex: 1;
  padding-left: 11px;
}

/* Worksheet */
.work {
  flex: 1;
  display: flex;
  min-height: 0;
}

.sheet {
  flex: 1;
  overflow: hidden;
  border-bottom: 1px solid #999;
}

.grid {
  width: 100%;
  height: 100%;
  table-layout: fixed;
  border-collapse: separate;
  border-spacing: 0;
}

.col-head {
  width: 71px;
}

.col-b,
.col-d {
  width: 186px;
}

.col-c {
  width: 178px;
}

.col-e {
  width: 248px;
}

.col-f {
  width: 359px;
}

.grid th {
  padding: 0;
  font-size: 36px;
  font-weight: 400;
  line-height: 50px;
  color: #000;
}

.grid thead th {
  height: 52px;
  border-bottom: 1px solid #999;
  background: linear-gradient(#e6e6e6, #999) right / 1px 100% no-repeat, #e6e6e6;
}

.grid thead .last {
  background: #e6e6e6;
}

.grid thead .is-active {
  border-bottom-color: #217346;
  box-shadow: inset 0 -1px #217346;
  background: linear-gradient(#b0b0b0, #b0b0b0) right / 1px 100% no-repeat, #d2d2d2;
  color: #217346;
}

.corner svg {
  margin-left: 24px;
}

.grid tbody th {
  vertical-align: bottom;
  border-right: 1px solid #999;
  border-bottom: 1px solid #b0b0b0;
  background: #e6e6e6;
}

.grid tbody .is-active {
  border-right-color: #217346;
  box-shadow: inset -1px 0 #217346;
  background: #d2d2d2;
  color: #217346;
}

.grid td {
  position: relative;
  padding: 0;
  background: #b4c6e7;
}

.grid .edge {
  border-right: 1px solid #999;
}

.grid .above {
  border-bottom: 1px solid #000;
}

.grid .before {
  border-right: 1px solid #000;
}

.grid .cell {
  padding: 0 4px;
  border-right: 1px solid #000;
  border-bottom: 1px solid #000;
  background: #ff0;
  color: #000;
  font-family: Lato, sans-serif;
  font-size: 36px;
  line-height: 53px;
  text-align: center;
}

.grid .cell--head {
  background: #ffc000;
}

.row-2 {
  height: 124px;
}

.row-3 {
  height: 108px;
}

.row-4,
.row-5,
.row-6 {
  height: 54px;
}

.selection {
  position: absolute;
  inset: -2px -1px -1px -1px;
  z-index: 1;
  border: 2px solid #217346;
  outline: 1px solid #fff;
  outline-offset: -3px;
}

.selection::before {
  content: "";
  position: absolute;
  left: 0;
  top: 1px;
  border: 7px solid #0a8010;
  border-right-color: transparent;
  border-bottom-color: transparent;
}

.selection::after {
  content: "";
  position: absolute;
  right: -4px;
  bottom: -4px;
  width: 7px;
  height: 7px;
  border: 1px solid #fff;
  background: #217346;
}

.arrow {
  position: absolute;
  right: -14px;
  top: 12px;
  z-index: 2;
}

.callout {
  position: absolute;
  inset: -5px 25px -5px 22px;
  z-index: 1;
  border: 5px solid #e3211c;
}

.warn,
.autofill {
  position: absolute;
  z-index: 1;
  width: 20px;
  height: 20px;
  border: 1px solid #b8b8b8;
  background: #fff;
}

.warn {
  right: 13px;
  top: 0;
}

.autofill {
  right: -22px;
  bottom: -22px;
}

/* Scroll bars */
.vbar {
  display: flex;
  flex-direction: column;
  width: 21px;
  padding: 2px 3px 0;
}

.vbar button,
.hbar button {
  flex: none;
  width: 15px;
  height: 15px;
  border: 1px solid #ababab;
  background: #fff;
}

.vbar__track {
  flex: 1;
  width: 15px;
  padding-top: 24px;
  background: #dadada;
}

.vbar__thumb {
  height: 42%;
  border: 1px solid #ababab;
  background: #fff;
}

.tri {
  width: 0;
  height: 0;
  border: 4px solid transparent;
}

.tri--up {
  border-bottom-color: #666;
  border-top: none;
}

.tri--down {
  border-top-color: #666;
  border-bottom: none;
}

.tri--left {
  border-right-color: #666;
  border-left: none;
}

.tri--right {
  border-left-color: #666;
  border-right: none;
}

/* Sheet tabs */
.sheets {
  display: flex;
  height: 28px;
  border-bottom: 1px solid #c6c6c6;
}

.sheets__nav {
  width: 28px;
}

.sheets__nav:first-child {
  margin-left: 15px;
}

.sheets__nav .tri--left {
  border-right-color: #c0c0c0;
}

.sheets__nav .tri--right {
  border-left-color: #c0c0c0;
}

.sheets__tab {
  height: 20px;
  margin-top: 3px;
  padding: 0 12px;
  border-right: 1px solid #999;
  color: #444;
}

.sheets__tab--active {
  height: 25px;
  margin: -1px 0 0 29px;
  width: 66px;
  padding: 4px 0 0;
  border-left: 1px solid #ababab;
  border-right: 1px solid #ababab;
  border-bottom: 2px solid #217346;
  background: #fff;
  color: #217346;
  font-weight: 700;
}

.sheets__add {
  margin-left: 32px;
}

.hbar {
  flex: 0 0 491px;
  display: flex;
  align-items: center;
  margin-left: auto;
  margin-right: 21px;
}

.dots--small {
  margin: 0 15px 0 0;
}

.hbar__track {
  flex: 1;
  height: 15px;
  padding-left: 56px;
  background: #dadada;
}

.hbar__thumb {
  width: 57%;
  height: 15px;
  border: 1px solid #ababab;
  background: #fff;
}

/* Status bar */
.status {
  display: flex;
  align-items: center;
  height: 17px;
  padding: 2px 8px 0;
  background: #f1f1f1;
  font-size: 11px;
  overflow: hidden;
}

.status__macro {
  margin-left: 18px;
  margin-right: auto;
}

.view {
  width: 38px;
  height: 17px;
}

.view--on {
  background: #c8c8c8;
}

.view + .zoom {
  margin-left: 2px;
}

.zoom {
  width: 13px;
}

.slider {
  width: 100px;
  height: 11px;
  appearance: none;
  background:
    linear-gradient(#999, #999) center / 1px 7px no-repeat,
    linear-gradient(#999, #999) center / 100% 1px no-repeat;
}

.slider::-webkit-slider-thumb {
  appearance: none;
  width: 5px;
  height: 11px;
  background: #555;
}

.status__pct {
  width: 36px;
  text-align: right;
}
</style>
